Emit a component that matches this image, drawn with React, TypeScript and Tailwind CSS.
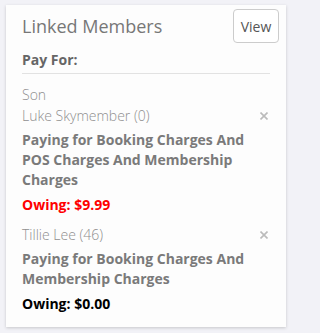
import React from "react";

function CloseX() {
  return (
    <svg width="8" height="8" viewBox="0 0 8 8" className="mr-[2px] shrink-0">
      <path d="M0.5 0.5 L7.5 7.5 M7.5 0.5 L0.5 7.5" stroke="#bbbbbb" strokeWidth="1.6" />
    </svg>
  );
}

function Member({
  relation,
  name,
  paying,
  owing,
  owingColor,
}: {
  relation?: string;
  name: string;
  paying: string;
  owing: string;
  owingColor: string;
}) {
  return (
    <div>
      {relation && (
        <div className="text-[14px] font-light leading-[22px] text-[#8f8f8f]">{relation}</div>
      )}
      <div className="flex items-center justify-between">
        <span className="text-[14px] font-light leading-[20px] text-[#8f8f8f]">{name}</span>
        <CloseX />
      </div>
      <div className="mt-[4px] text-[14px] font-bold leading-[20px] text-[#7a7a7a]">{paying}</div>
      <div className={`mt-[5px] text-[14px] font-bold leading-[20px] ${owingColor}`}>{owing}</div>
    </div>
  );
}

export default function App() {
  return (
    <div
      className="min-h-screen w-full bg-[#f2f2f7] pl-[6px] pt-[5px] pb-[6px]"
      style={{ fontFamily: '"Open Sans", sans-serif' }}
    >
      <div className="h-[322px] w-[280px] bg-[#fdfdfd] shadow-[0_1px_3px_rgba(0,0,0,0.18)]">
        <div className="flex items-start justify-between pl-4 pr-[7px] pt-[4px]">
          <h2 className="mt-[3px] text-[18px] font-normal leading-[28px] text-[#777777]">
            Linked Members
          </h2>
          <button className="h-[34px] w-[46px] rounded-[4px] border border-[#cccccc] bg-white text-[14px] text-[#555555]">
            View
          </button>
        </div>
        <div className="px-4">
          <div className="mt-[7px] border-b border-[#e2e2e2] pb-[3px] text-[14px] font-bold leading-[20px] text-[#666666]">
            Pay For:
          </div>
          <div className="mt-[10px]">
            <Member
              relation="Son"
              name="Luke Skymember (0)"
              paying="Paying for Booking Charges And POS Charges And Membership Charges"
              owing="Owing: $9.99"
              owingColor="text-[#ff0000]"
            />
          </div>
          <div className="mt-[10px]">
            <Member
              name="Tillie Lee (46)"
              paying="Paying for Booking Charges And Membership Charges"
              owing="Owing: $0.00"
              owingColor="text-black"
            />
          </div>
        </div>
      </div>
    </div>
  );
}
